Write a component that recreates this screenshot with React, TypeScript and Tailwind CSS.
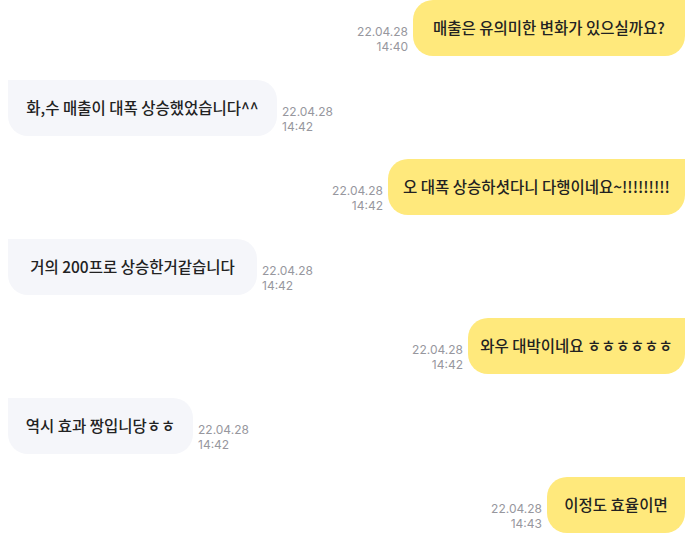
import React from "react";

type Msg = { me: boolean; text: string; date: string; time: string; w: string };

const msgs: Msg[] = [
  { me: true, text: "매출은 유의미한 변화가 있으실까요?", date: "22.04.28", time: "14:40", w: "w-[272px]" },
  { me: false, text: "화,수 매출이 대폭 상승했었습니다^^", date: "22.04.28", time: "14:42", w: "w-[269px]" },
  { me: true, text: "오 대폭 상승하셧다니 다행이네요~!!!!!!!!!", date: "22.04.28", time: "14:42", w: "w-[297px]" },
  { me: false, text: "거의 200프로 상승한거같습니다", date: "22.04.28", time: "14:42", w: "w-[249px]" },
  { me: true, text: "와우 대박이네요 ㅎㅎㅎㅎㅎㅎ", date: "22.04.28", time: "14:42", w: "w-[217px]" },
  { me: false, text: "역시 효과 짱입니당ㅎㅎ", date: "22.04.28", time: "14:42", w: "w-[185px]" },
  { me: true, text: "이정도 효율이면", date: "22.04.28", time: "14:43", w: "w-[138px]" },
];

function Stamp({ date, time, right }: { date: string; time: string; right: boolean }) {
  return (
    <div
      className={`flex flex-col text-[12px] leading-[15px] text-[#97979e] mb-[2px] ${right ? "items-end" : "items-start"}`}
      style={{ fontFamily: "Inter, 'Noto Sans', sans-serif" }}
    >
      <span>{date}</span>
      <span>{time}</span>
    </div>
  );
}

export default function App() {
  return (
    <div className="w-[700px] h-[538px] bg-white overflow-hidden">
      <div className="flex flex-col gap-[23.5px] pl-2 pr-[15px]">
        {msgs.map((m, i) => (
          <div key={i} className={`flex items-end gap-[5px] ${m.me ? "justify-end" : "justify-start"}`}>
            {m.me && <Stamp date={m.date} time={m.time} right />}
            <div
              className={`${m.w} h-14 flex items-center justify-center text-[15.5px] font-medium text-[#222222] whitespace-nowrap ${
                m.me
                  ? "bg-[#ffe97c] rounded-[20px] rounded-tr-none"
                  : "bg-[#f5f6fa] rounded-[20px] rounded-tl-none"
              }`}
              style={{ fontFamily: "'Noto Sans CJK KR', 'Noto Sans', sans-serif" }}
            >
              {m.text}
            </div>
            {!m.me && <Stamp date={m.date} time={m.time} right={false} />}
          </div>
        ))}
      </div>
    </div>
  );
}
